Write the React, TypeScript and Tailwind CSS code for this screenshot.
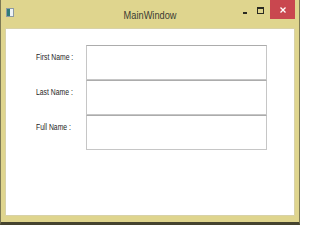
const rows = ['First Name :', 'Last Name :', 'Full Name :'];

const App = () => {
  return (
    <div className="w-[300px] h-[225px] flex flex-col bg-[#dfd58e] border-x border-x-[#7d7954] border-b-[3px] border-b-[#45432f] font-['Liberation_Sans',sans-serif]">
      {/* title bar */}
      <div className="h-[28px] grid grid-cols-[1fr_auto_1fr] shrink-0">
        <div className="flex items-start pl-[5px] pt-[8px]">
          <div className="w-[8px] h-[9px] border border-[#8d9aa3] bg-[#eef3f6] flex">
            <div className="w-[3px] bg-[#2f7b7a]" />
          </div>
        </div>
        <div className="pt-[9px] text-[10.5px] leading-[13px] text-[#3b3b33] scale-x-[0.88]">MainWindow</div>
        <div className="flex items-start justify-end pr-[4px]">
          <div className="w-[14px] h-[19px] pt-[12px] pl-[4px]">
            <div className="w-[4px] h-[2px] bg-[#2a2a22]" />
          </div>
          <div className="w-[17px] h-[19px] pt-[7px] pl-[4px]">
            <div className="w-[7px] h-[7px] border border-[#2a2a22] border-t-2" />
          </div>
          <div className="w-[25px] h-[19px] bg-[#c9474f] flex items-center justify-center">
            <svg width="6" height="6" viewBox="0 0 6 6">
              <path d="M0.5 0.5L5.5 5.5M5.5 0.5L0.5 5.5" stroke="#ffffff" strokeWidth="1.3" />
            </svg>
          </div>
        </div>
      </div>

      {/* client area */}
      <div className="mx-[4px] h-[188px] bg-white border border-[#d8d2a8] pt-[16px] pl-[30px]">
        <div className="flex flex-col">
          {rows.map((label, i) => (
            <div key={i} className="flex items-start h-[35px]">
              <div className="w-[50px] pt-[6px] text-[9px] leading-[12px] text-[#1e1e1e] scale-x-[0.76] origin-left whitespace-nowrap">
                {label}
              </div>
              <div className="w-[181px] h-[35px] bg-white border border-[#c6c6c6] border-t-[#acacac]" />
            </div>
          ))}
        </div>
      </div>
    </div>
  );
};

export default App;
